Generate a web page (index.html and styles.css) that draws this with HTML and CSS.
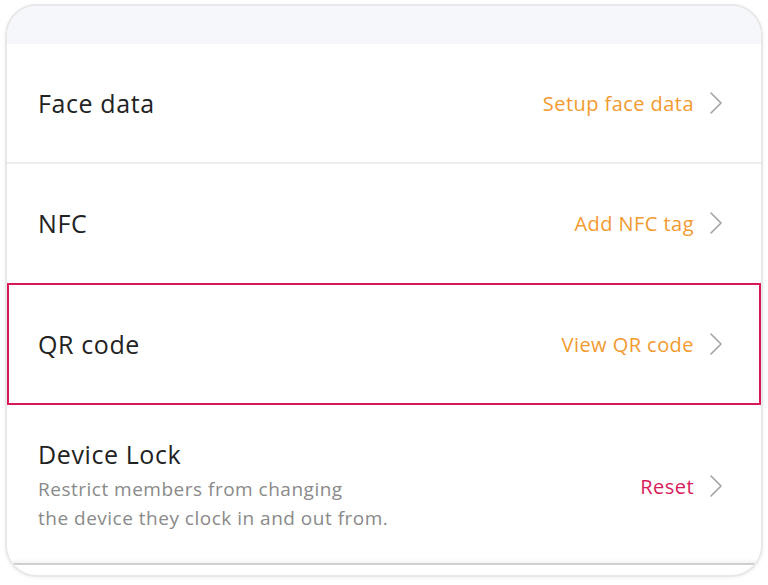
FILE: index.html
```html
<!DOCTYPE html>
<html lang="en">
<head>
<meta charset="utf-8">
<title>Settings</title>
<link rel="stylesheet" href="styles.css">
</head>
<body>
<div class="frame">
  <div class="band"></div>
  <div class="row">
    <span class="label">Face data</span>
    <span class="action orange">Setup face data</span>
    <svg class="chev" viewBox="0 0 14 24" width="14" height="24"><path d="M2 2 L12 12 L2 22" fill="none" stroke="#a3a3a3" stroke-width="1.6" stroke-linecap="round" stroke-linejoin="round"/></svg>
  </div>
  <div class="sep"></div>
  <div class="row">
    <span class="label">NFC</span>
    <span class="action orange">Add NFC tag</span>
    <svg class="chev" viewBox="0 0 14 24" width="14" height="24"><path d="M2 2 L12 12 L2 22" fill="none" stroke="#a3a3a3" stroke-width="1.6" stroke-linecap="round" stroke-linejoin="round"/></svg>
  </div>
  <div class="row highlight">
    <span class="label">QR code</span>
    <span class="action orange">View QR code</span>
    <svg class="chev" viewBox="0 0 14 24" width="14" height="24"><path d="M2 2 L12 12 L2 22" fill="none" stroke="#a3a3a3" stroke-width="1.6" stroke-linecap="round" stroke-linejoin="round"/></svg>
  </div>
  <div class="row tall">
    <div class="texts">
      <span class="label">Device Lock</span>
      <span class="sub">Restrict members from changing<br>the device they clock in and out from.</span>
    </div>
    <span class="action pink">Reset</span>
    <svg class="chev" viewBox="0 0 14 24" width="14" height="24"><path d="M2 2 L12 12 L2 22" fill="none" stroke="#a3a3a3" stroke-width="1.6" stroke-linecap="round" stroke-linejoin="round"/></svg>
  </div>
  <div class="foot"></div>
</div>
</body>
</html>
```
FILE: styles.css
```css
html, body {
  margin: 0;
  padding: 0;
  background: #ffffff;
}
body {
  font-family: "Open Sans", "Noto Sans", sans-serif;
  width: 768px;
  height: 585px;
  overflow: hidden;
}
.frame {
  margin: 4px 5px 0 5px;
  height: 569px;
  border: 2px solid #e8e8ea;
  border-radius: 32px;
  overflow: hidden;
  display: flex;
  flex-direction: column;
  background: #fff;
  box-shadow: 0 1px 4px rgba(0,0,0,0.06);
}
.band {
  height: 38px;
  background: #f6f7fa;
  flex: none;
}
.row {
  display: flex;
  align-items: center;
  height: 118px;
  padding: 0 38px 0 31px;
  flex: none;
  box-sizing: border-box;
}
.sep {
  height: 2px;
  background: #ececec;
  flex: none;
}
.label {
  font-size: 25px;
  color: #222222;
  flex: 1;
  letter-spacing: 0.6px;
}
.action {
  font-size: 20px;
  letter-spacing: 0.45px;
  margin-right: 15px;
}
.orange { color: #f29a30; }
.pink { color: #d81b5c; }
.chev { flex: none; }
.highlight {
  height: 122px;
  border: 2px solid #d6175a;
  margin-top: 1px;
  padding-left: 29px;
  padding-right: 36px;
}
.tall {
  height: 152px;
  margin-top: 1px;
  padding-top: 8px;
}
.texts {
  flex: 1;
  display: flex;
  flex-direction: column;
}
.texts .label { flex: none; line-height: 30px; }
.sub {
  font-size: 19px;
  letter-spacing: 0.5px;
  line-height: 29px;
  color: #8a8a8a;
  margin-top: 6px;
}
.foot {
  flex: 1;
  background: linear-gradient(#ffffff, #f4f4f4);
  border-bottom: 2px solid #cfcfcf;
  margin-bottom: 10px;
}
```
